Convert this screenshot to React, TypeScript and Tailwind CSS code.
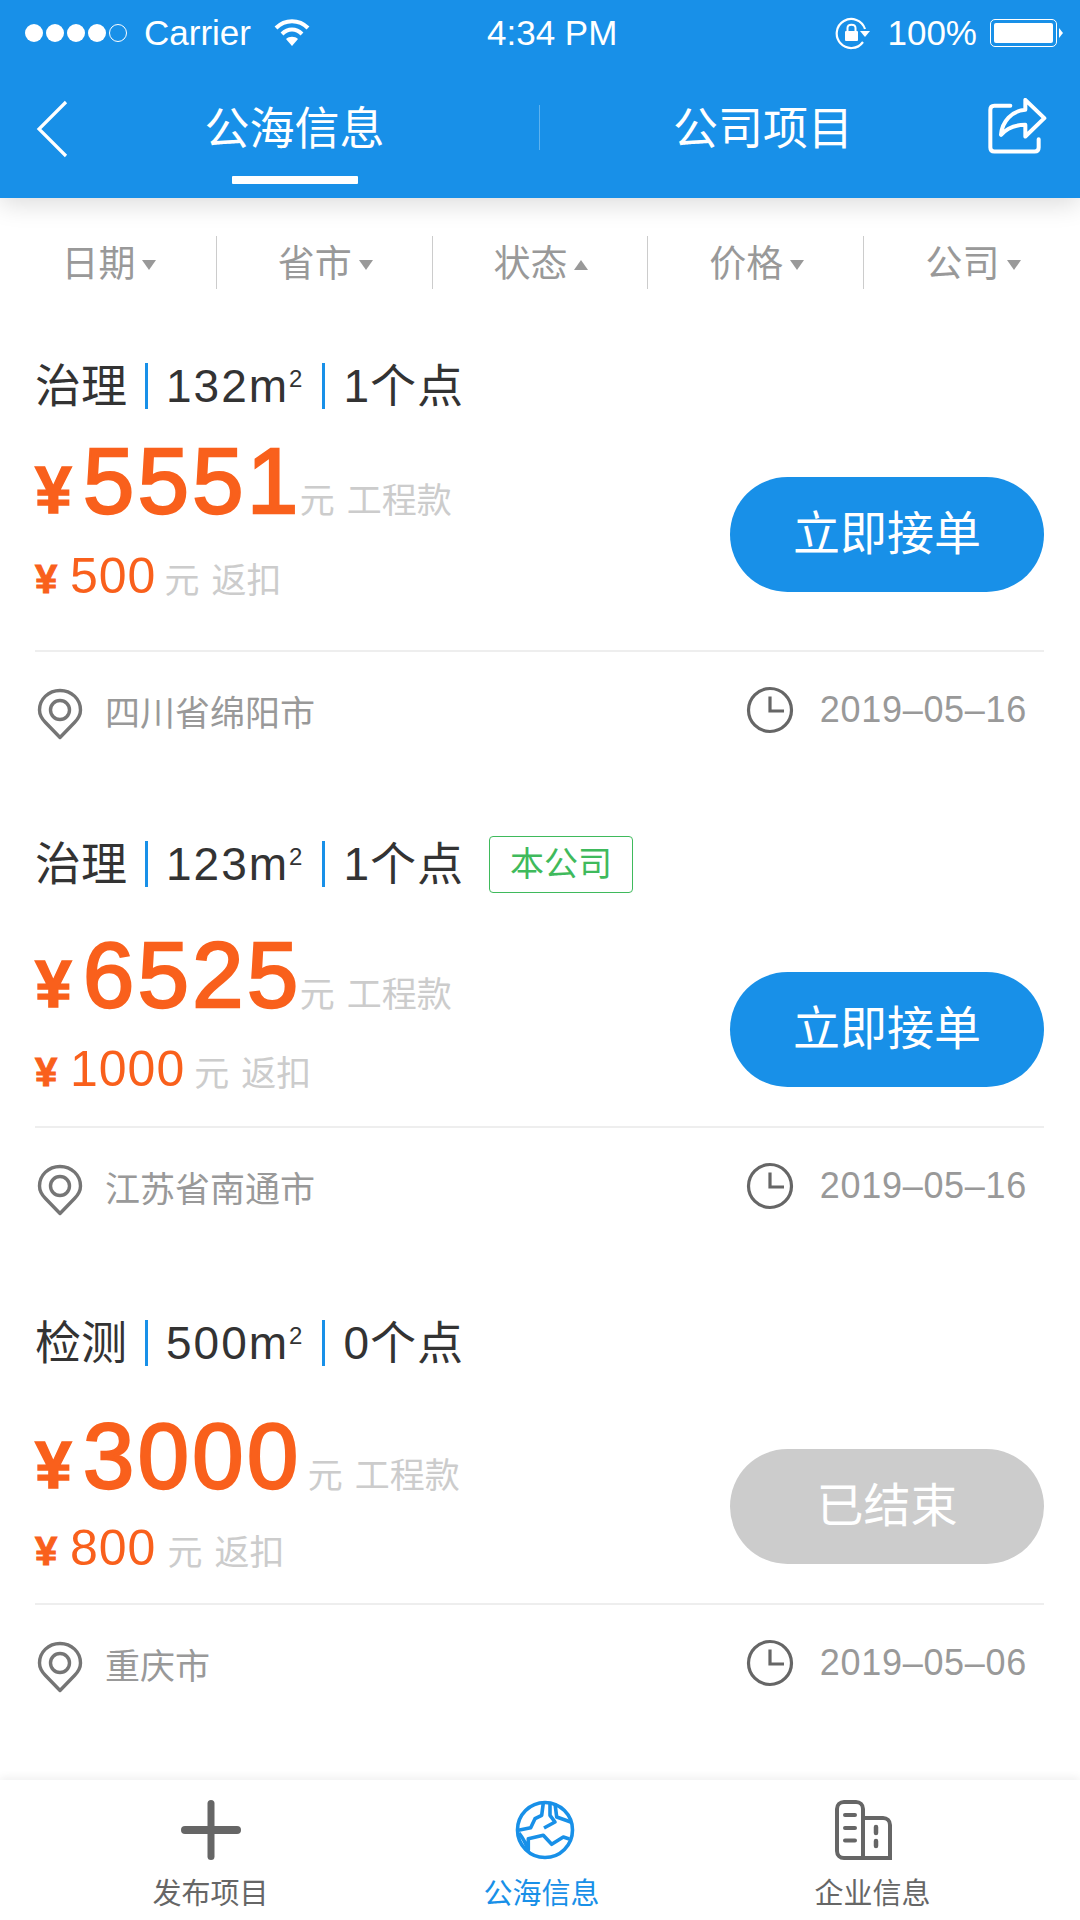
function Caret({ up }: { up?: boolean }) {
  return up ? (
    <span className="ml-[7px] mt-[4px] h-0 w-0 border-x-[7px] border-b-[10px] border-x-transparent border-b-[#999]" />
  ) : (
    <span className="ml-[7px] mt-[4px] h-0 w-0 border-x-[7px] border-t-[10px] border-x-transparent border-t-[#999]" />
  );
}

function PinIcon() {
  return (
    <svg width="46" height="52" viewBox="0 0 46 52" fill="none" stroke="#757575" strokeWidth="3.4">
      <path d="M23 49.5 L8.5 34.5 C4.5 30.5 2.5 26.5 2.5 22 C2.5 11 11.5 2.5 23 2.5 C34.5 2.5 43.5 11 43.5 22 C43.5 26.5 41.5 30.5 37.5 34.5 Z" strokeLinejoin="round" />
      <circle cx="23" cy="22" r="9.5" />
    </svg>
  );
}

function ClockIcon() {
  return (
    <svg width="48" height="48" viewBox="0 0 48 48" fill="none" stroke="#666" strokeWidth="3.2">
      <circle cx="24" cy="24" r="21.5" />
      <path d="M24 10.5 V25 H38" strokeWidth="3.2" />
    </svg>
  );
}

function Card(props: {
  kind: string;
  area: string;
  points: string;
  own?: boolean;
  price: string;
  priceGap: string;
  rebate: string;
  rebateGap: string;
  rebateTop: string;
  place: string;
  date: string;
  done?: boolean;
  top: string;
  bodyGap: string;
  buttonGap: string;
  dividerGap: string;
}) {
  return (
    <div className={`flex flex-col ${props.top}`}>
      <div className="flex h-[60px] items-center pl-[35px] text-[46px] leading-none text-[#333]">
        <span>{props.kind}</span>
        <span className="ml-[18px] h-[46px] w-[3px] bg-[#1890e8]" />
        <span className="ml-[18px] flex items-start tracking-[2px]">
          {props.area}m<span className="mt-[4px] text-[24px] leading-none tracking-normal">2</span>
        </span>
        <span className="ml-[20px] h-[46px] w-[3px] bg-[#1890e8]" />
        <span className="ml-[18px] tracking-[1px]">{props.points}</span>
        {props.own && (
          <span className="ml-[25px] flex h-[57px] w-[144px] items-center justify-center rounded-[4px] border border-[#3fba5c] text-[34px] text-[#3fba5c]">
            本公司
          </span>
        )}
      </div>

      <div className={`flex items-center justify-between pl-[35px] pr-[36px] ${props.bodyGap}`}>
        <div className="flex flex-col">
          <div className="flex h-[96px] items-baseline text-[#f9601c]">
            <span className="w-[48px] text-[66px] font-bold leading-none [-webkit-text-stroke:1.5px_#f9601c]">¥</span>
            <span className="text-[92px] leading-none tracking-[3.5px] [-webkit-text-stroke:2.5px_#f9601c]">{props.price}</span>
            <span className={`${props.priceGap} text-[35px] text-[#ccc]`}>元</span>
            <span className="ml-[12px] text-[35px] text-[#ccc]">工程款</span>
          </div>
          <div className={`${props.rebateTop} flex h-[60px] items-baseline text-[#f9601c]`}>
            <span className="w-[35px] text-[40px] font-bold leading-none [-webkit-text-stroke:1px_#f9601c]">¥</span>
            <span className="text-[50px] leading-none tracking-[1px]">{props.rebate}</span>
            <span className={`${props.rebateGap} text-[35px] text-[#ccc]`}>元</span>
            <span className="ml-[12px] text-[35px] text-[#ccc]">返扣</span>
          </div>
        </div>
        <div
          className={`${props.buttonGap} flex h-[115px] w-[314px] items-center justify-center rounded-full text-[47px] text-white ${
            props.done ? 'bg-[#cccccc]' : 'bg-[#1890e8]'
          }`}
        >
          {props.done ? '已结束' : '立即接单'}
        </div>
      </div>

      <div className={`ml-[35px] mr-[36px] h-[2px] bg-[#eeeeee] ${props.dividerGap}`} />

      <div className="flex h-[88px] items-center justify-between pl-[37px] pr-[53px] pt-[36px]">
        <div className="flex items-center">
          <PinIcon />
          <span className="ml-[22px] text-[35px] text-[#999]">{props.place}</span>
        </div>
        <div className="mb-[8px] flex items-center">
          <ClockIcon />
          <span className="ml-[26px] text-[36px] tracking-[0.7px] text-[#999]">{props.date}</span>
        </div>
      </div>
    </div>
  );
}

export default function App() {
  const filters = ['日期', '省市', '状态', '价格', '公司'];

  return (
    <div className="flex h-[1920px] w-[1080px] flex-col overflow-hidden bg-white [font-family:'Liberation_Sans','Noto_Sans_CJK_SC',sans-serif]">
      {/* header */}
      <div className="relative z-10 h-[198px] bg-[#1890e8] text-white shadow-[0_6px_24px_rgba(0,0,0,0.14)]">
        <div className="flex h-[66px] items-center pl-[25px] pr-[17px] text-[35px]">
          <div className="flex w-[462px] items-center">
            <div className="flex items-center gap-[3px]">
              <span className="h-[18px] w-[18px] rounded-full bg-white" />
              <span className="h-[18px] w-[18px] rounded-full bg-white" />
              <span className="h-[18px] w-[18px] rounded-full bg-white" />
              <span className="h-[18px] w-[18px] rounded-full bg-white" />
              <span className="h-[18px] w-[18px] rounded-full border-[1.5px] border-white" />
            </div>
            <span className="ml-[17px]">Carrier</span>
            <svg className="ml-[22px]" width="38" height="30" viewBox="0 0 38 30" fill="none" stroke="white" strokeWidth="4">
              <path d="M3 10 C12 1 26 1 35 10" />
              <path d="M9 16 C15 10 23 10 29 16" />
              <path d="M19 28 L13 21 C16 18 22 18 25 21 Z" fill="white" stroke="none" />
            </svg>
          </div>
          <span>4:34 PM</span>
          <div className="ml-auto flex items-center">
            <svg width="35" height="34" viewBox="0 0 35 34" fill="none" stroke="white" strokeWidth="2.2">
              <path d="M28 26 A14.5 14.5 0 1 1 30 13" />
              <path d="M35 15 L25 15 L30 21 Z" fill="white" stroke="none" />
              <rect x="10" y="15" width="13" height="10" rx="1" fill="white" stroke="none" />
              <path d="M12.5 15 V12 C12.5 7.5 20.5 7.5 20.5 12 V15" strokeWidth="2" />
            </svg>
            <span className="ml-[17px]">100%</span>
            <div className="ml-[13px] flex items-center">
              <div className="h-[28px] w-[67px] rounded-[5px] border border-white p-[3px]">
                <div className="h-full w-full rounded-[2px] bg-white" />
              </div>
              <span className="ml-[2px] h-0 w-0 border-y-[5px] border-l-[4px] border-y-transparent border-l-white" />
            </div>
          </div>
        </div>

        <div className="flex h-[132px] items-start">
          <div className="w-[80px] pl-[36px] pt-[34px]">
            <svg width="32" height="58" viewBox="0 0 32 58" fill="none" stroke="white" strokeWidth="3.2">
              <path d="M30 2 L3 29 L30 56" />
            </svg>
          </div>
          <div className="w-[429px] pt-[36px]">
            <div className="flex flex-col items-center">
              <span className="text-[45px] leading-[56px]">公海信息</span>
              <span className="mt-[18px] h-[8px] w-[126px] rounded-[1px] bg-white" />
            </div>
          </div>
          <div className="ml-[30px] mt-[39px] h-[45px] w-px bg-[#5db2ef]" />
          <div className="w-[446px] pt-[36px] text-center text-[45px] leading-[56px]">公司项目</div>
          <div className="pl-[1px] pt-[32px]">
            <svg width="60" height="57" viewBox="50 25 180 170" fill="none" stroke="white" strokeWidth="12" strokeLinejoin="round" strokeLinecap="round">
              <path d="M120 48 H72 C64 48 60 52 60 60 V173 C60 181 64 185 72 185 H193 C201 185 205 181 205 173 V148" />
              <path d="M165 30 L222 85 L165 140 V105 C135 105 110 115 92 135 C95 95 125 62 165 60 Z" />
            </svg>
          </div>
        </div>
      </div>

      {/* filter bar */}
      <div className="mt-[38px] flex h-[53px] items-center">
        {filters.map((f, i) => (
          <div
            key={f}
            className={`flex h-full items-center justify-center pl-[2px] text-[37px] text-[#999] ${i === 0 ? 'w-[217px]' : 'w-[216px]'} ${i < 4 ? 'border-r-[1.5px] border-[#ccc]' : ''}`}
          >
            <span className="translate-y-[2px]">{f}</span>
            <Caret up={f === '状态'} />
          </div>
        ))}
      </div>

      <Card
        top="mt-[67px]"
        kind="治理"
        area="132"
        points="1个点"
        price="5551"
        priceGap="-ml-[2px]"
        rebate="500"
        rebateGap="ml-[8px]"
        rebateTop="mt-[20px]"
        place="四川省绵阳市"
        date="2019–05–16"
        bodyGap="mt-[19px]"
        buttonGap="mt-[22px]"
        dividerGap="mt-[39px]"
      />
      <Card
        top="mt-[94px]"
        kind="治理"
        area="123"
        points="1个点"
        own
        price="6525"
        priceGap="-ml-[2px]"
        rebate="1000"
        rebateGap="ml-[9px]"
        rebateTop="mt-[19px]"
        place="江苏省南通市"
        date="2019–05–16"
        bodyGap="mt-[35px]"
        buttonGap="mt-[25px]"
        dividerGap="mt-[22px]"
      />
      <Card
        top="mt-[97px]"
        kind="检测"
        area="500"
        points="0个点"
        price="3000"
        priceGap="ml-[6px]"
        rebate="800"
        rebateGap="ml-[11px]"
        rebateTop="mt-[17px]"
        place="重庆市"
        date="2019–05–06"
        bodyGap="mt-[37px]"
        buttonGap="mt-[20px]"
        dividerGap="mt-[20px]"
        done
      />

      {/* tab bar */}
      <div className="mt-auto grid h-[140px] grid-cols-3 bg-white pl-[45px] pr-[42px] text-[29px] text-[#666] shadow-[0_-3px_8px_rgba(0,0,0,0.06)]">
        <div className="flex flex-col items-center pt-[20px]">
          <svg width="60" height="60" viewBox="0 0 60 60" fill="#666">
            <rect x="26.5" y="0" width="7" height="60" rx="3.5" />
            <rect x="0" y="26" width="60" height="8" rx="4" />
          </svg>
          <span className="mt-[17px] leading-[34px]">发布项目</span>
        </div>
        <div className="flex flex-col items-center pt-[20px] text-[#1890e8]">
          <svg className="ml-[7px]" width="60" height="60" viewBox="0 0 60 60" fill="none" stroke="#1890e8" strokeWidth="3.6" strokeLinejoin="round">
            <circle cx="30" cy="30" r="27.5" />
            <path d="M28.3 3 L26.7 15.3 L20 18.7 L15.7 27.7 L3.3 30.3" />
            <path d="M35 3 V15.3 L40 22 L29 28" />
            <path d="M40 3.7 L41.7 17 L55.7 22" />
            <path d="M4 33 C8 38 11 44 13.3 50 V38.7 L28.3 35.3 L36.7 44.3 L48.3 37 L54.3 39" />
          </svg>
          <span className="mt-[17px] leading-[34px]">公海信息</span>
        </div>
        <div className="flex flex-col items-center pt-[20px]">
          <svg className="mr-[18px]" width="57" height="60" viewBox="0 0 57 60" fill="none" stroke="#666" strokeWidth="4">
            <path d="M28 58 H9 C5 58 2 55 2 51 V9 C2 5 5 2 9 2 H21 C25 2 28 5 28 9 V58 H55 V25 C55 21 52 18 48 18 H28" />
            <path d="M10 15 H20 M10 28 H20 M10 40.5 H20" strokeWidth="4" strokeLinecap="round" />
            <path d="M41 27 V33 M41 41 V46" strokeWidth="4.5" strokeLinecap="round" />
          </svg>
          <span className="mt-[17px] leading-[34px]">企业信息</span>
        </div>
      </div>
    </div>
  );
}
